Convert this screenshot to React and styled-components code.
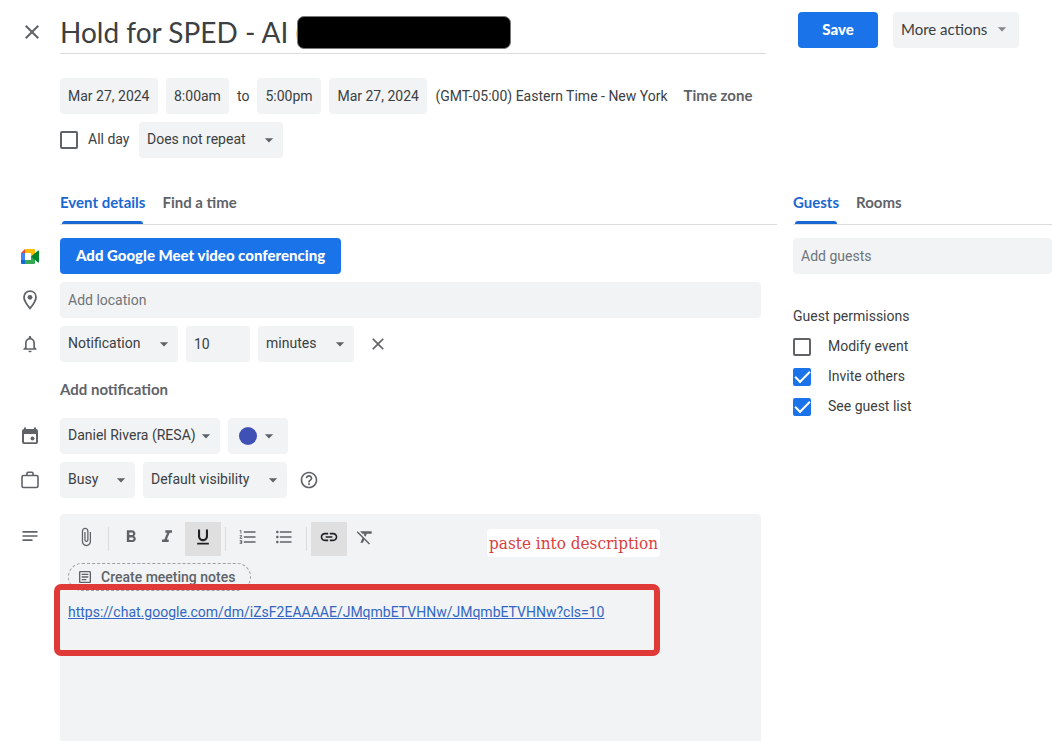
import React from 'react'
import styled, { createGlobalStyle, css } from 'styled-components'
import {
  MdArrowDropDown,
  MdAttachFile,
  MdClose,
  MdFormatBold,
  MdFormatClear,
  MdFormatItalic,
  MdFormatListBulleted,
  MdFormatListNumbered,
  MdFormatUnderlined,
  MdHelpOutline,
  MdLink,
  MdNotes,
  MdNotificationsNone,
  MdOutlineArticle
} from 'react-icons/md'

const NOTE_LINK = 'https://chat.google.com/dm/iZsF2EAAAAE/JMqmbETVHNw/JMqmbETVHNw?cls=10'

const Dropdown = ({ label, value, width }) => (
  <SelectBox $width={width}>
    <select aria-label={label} defaultValue={value}>
      <option>{value}</option>
    </select>
    <MdArrowDropDown />
  </SelectBox>
)

const Check = ({ id, label, wide, checked }) => (
  <CheckRow $wide={wide}>
    <input type='checkbox' id={id} defaultChecked={checked} />
    <label htmlFor={id}>{label}</label>
  </CheckRow>
)

const MeetIcon = () => (
  <svg viewBox='0 0 18 15' width='18' height='15'>
    <path d='M4 0v4H0z' fill='#ea4335' />
    <path d='M4 0h9.2Q14 0 14 1v4.500L10 8V4H4z' fill='#fbbc04' />
    <path d='M0 4h4v7H0z' fill='#4285f4' />
    <path d='M0 11h4v4H1q-1 0-1-1z' fill='#1967d2' />
    <path d='M4 11h6V7.500l4 2V14q0 1-1 1H4z' fill='#34a853' />
    <path d='M10 7.500 16.800 1.700Q18 1 18 2v11q0 1-1.200.300z' fill='#00832d' />
  </svg>
)

const PinIcon = () => (
  <svg viewBox='0 0 20 20' width='20' height='20'>
    <path
      d='M10 1.200c3.500 0 6 2.600 6 6 0 3.300-2.500 7-6 11.200-3.500-4.200-6-7.900-6-11.200 0-3.400 2.500-6 6-6z'
      fill='none'
      stroke='currentColor'
      strokeWidth='1.800'
    />
    <circle cx='10' cy='7.300' r='2.400' fill='currentColor' />
  </svg>
)

const CalendarIcon = () => (
  <svg viewBox='0 0 20 20' width='20' height='20' fill='currentColor'>
    <path
      fillRule='evenodd'
      d='M4 1.500h2V3h8V1.500h2V3a2 2 0 0 1 2 2v11a2 2 0 0 1-2 2H4a2 2 0 0 1-2-2V5a2 2 0 0 1 2-2zM4 8v8.300h12V8z'
    />
    <circle cx='12.500' cy='12.500' r='2' />
  </svg>
)

const CaseIcon = () => (
  <svg viewBox='0 0 20 20' width='20' height='20' fill='none' stroke='currentColor' strokeWidth='1.600'>
    <rect x='2' y='5.500' width='16' height='12' rx='1.500' />
    <path d='M7 5.500V3.300q0-1 1-1h4q1 0 1 1v2.200' />
  </svg>
)

const App = () => (
  <Page>
    <GlobalStyle />
    <Header>
      <IconButton aria-label='Cancel event editing' $size={60}>
        <MdClose size={24} />
      </IconButton>
      <TitleBox>
        <input aria-label='Title' defaultValue='Hold for SPED - AI (' />
        <Redaction />
      </TitleBox>
      <Actions>
        <Primary $save>Save</Primary>
        <MoreButton>
          More actions
          <MdArrowDropDown size={20} />
        </MoreButton>
      </Actions>
    </Header>

    <Schedule>
      <Line>
        <Field $width={98} aria-label='Start date' defaultValue='Mar 27, 2024' />
        <Field $width={63} aria-label='Start time' defaultValue='8:00am' />
        <span>to</span>
        <Field $width={64} aria-label='End time' defaultValue='5:00pm' />
        <Field $width={98} aria-label='End date' defaultValue='Mar 27, 2024' />
        <span>(GMT-05:00) Eastern Time - New York</span>
        <TextButton $inset>Time zone</TextButton>
      </Line>
      <Line>
        <Check id='all-day' label='All day' />
        <Dropdown label='Repeat' value='Does not repeat' width={144} />
      </Line>
    </Schedule>

    <Columns>
      <Details>
        <Tabs $indent>
          <Tab $active>Event details</Tab>
          <Tab>Find a time</Tab>
        </Tabs>
        <Rows>
          <Row>
            <RowIcon><MeetIcon /></RowIcon>
            <Primary>Add Google Meet video conferencing</Primary>
          </Row>
          <Row>
            <RowIcon><PinIcon /></RowIcon>
            <Field aria-label='Location' placeholder='Add location' />
          </Row>
          <Row>
            <RowIcon><MdNotificationsNone /></RowIcon>
            <Line>
              <Dropdown label='Notification type' value='Notification' width={118} />
              <Field $width={64} aria-label='Amount' defaultValue='10' />
              <Dropdown label='Unit' value='minutes' width={96} />
              <IconButton aria-label='Remove notification' $size={32}>
                <MdClose size={20} />
              </IconButton>
            </Line>
          </Row>
          <Row>
            <span />
            <TextButton $tall>Add notification</TextButton>
          </Row>
          <Row>
            <RowIcon><CalendarIcon /></RowIcon>
            <Line>
              <Dropdown label='Calendar' value='Daniel Rivera (RESA)' width={160} />
              <ColorButton aria-label='Event color'>
                <i />
                <MdArrowDropDown size={20} />
              </ColorButton>
            </Line>
          </Row>
          <Row>
            <RowIcon><CaseIcon /></RowIcon>
            <Line>
              <Dropdown label='Availability' value='Busy' width={75} />
              <Dropdown label='Visibility' value='Default visibility' width={144} />
              <IconButton aria-label='Visibility help' $size={28}>
                <MdHelpOutline size={20} />
              </IconButton>
            </Line>
          </Row>
          <Row $spaced>
            <RowIcon $top><MdNotes /></RowIcon>
            <Editor>
              <Toolbar>
                <button aria-label='Attach file'><MdAttachFile /></button>
                <hr />
                <button aria-label='Bold'><MdFormatBold /></button>
                <button aria-label='Italic'><MdFormatItalic /></button>
                <button aria-label='Underline' aria-pressed='true'><MdFormatUnderlined /></button>
                <hr />
                <button aria-label='Numbered list'><MdFormatListNumbered /></button>
                <button aria-label='Bulleted list'><MdFormatListBulleted /></button>
                <hr />
                <button aria-label='Link' aria-pressed='true'><MdLink /></button>
                <button aria-label='Remove formatting'><MdFormatClear /></button>
              </Toolbar>
              <Chip>
                <MdOutlineArticle size={16} />
                Create meeting notes
              </Chip>
              <NoteLink href={NOTE_LINK}>{NOTE_LINK}</NoteLink>
              <Highlight />
              <Callout>paste into description</Callout>
            </Editor>
          </Row>
        </Rows>
      </Details>

      <Guests>
        <Tabs>
          <Tab $active>Guests</Tab>
          <Tab>Rooms</Tab>
        </Tabs>
        <Field aria-label='Guests' placeholder='Add guests' />
        <h2>Guest permissions</h2>
        <Check wide id='modify' label='Modify event' />
        <Check wide id='invite' label='Invite others' checked />
        <Check wide id='see-list' label='See guest list' checked />
      </Guests>
    </Columns>
  </Page>
)

export default App

const GlobalStyle = createGlobalStyle`
  * {
    box-sizing: border-box;
  }
  html, body, #root {
    height: 100%;
  }
  body {
    margin: 0;
    background: #ffffff;
    color: #3c4043;
    font-family: Roboto, sans-serif;
    font-size: 14px;
    line-height: 20px;
  }
  button, input, select {
    margin: 0;
    border: none;
    font: inherit;
    color: inherit;
  }
  button {
    padding: 0;
    background: transparent;
    cursor: pointer;
  }
  svg {
    flex: none;
  }
`

const brandText = css`
  padding-bottom: 2px;
  font-family: Lato, sans-serif;
  font-size: 15px;
  font-weight: 700;
`

const Page = styled.div`
  display: flex;
  flex-direction: column;
  height: 100%;
`

/**
 * STYLED - Header
 */
const Header = styled.header`
  display: flex;
  align-items: flex-start;
  padding-top: 10px;
  padding-right: 33px;
`

const IconButton = styled.button`
  display: flex;
  align-items: center;
  justify-content: center;
  width: ${props => props.$size}px;
  height: 36px;
  color: #5f6368;
  ${Header} & {
    height: 44px;
    padding-left: 4px;
  }
`

const TitleBox = styled.div`
  position: relative;
  flex: 1;
  border-bottom: 1px solid #dadce0;
  input {
    display: block;
    width: 100%;
    height: 43px;
    padding: 0;
    background: transparent;
    font-family: Lato, sans-serif;
    font-size: 28px;
    outline: none;
  }
`

const Redaction = styled.div`
  position: absolute;
  top: 6px;
  left: 237px;
  width: 214px;
  height: 33px;
  border: 1px solid #77797b;
  border-radius: 7px;
  background: #000000;
`

const Actions = styled.div`
  display: flex;
  gap: 15px;
  margin-top: 2px;
  margin-left: 32px;
`

const Primary = styled.button`
  justify-self: start;
  min-width: 80px;
  height: 36px;
  padding: 0 16px;
  border-radius: 4px;
  background: #1a73e8;
  color: #ffffff;
  ${brandText}
  font-weight: 900;
`

const MoreButton = styled.button`
  display: flex;
  align-items: center;
  justify-content: space-between;
  width: 126px;
  height: 36px;
  padding: 0 7px 0 8px;
  border-radius: 4px;
  background: #f1f3f4;
  ${brandText}
  font-weight: 400;
  svg {
    color: #80868b;
  }
`

/**
 * STYLED - form controls
 */
const Line = styled.div`
  display: flex;
  align-items: center;
  gap: 8px;
`

const Schedule = styled.section`
  display: flex;
  flex-direction: column;
  gap: 8px;
  padding-top: 24px;
  padding-left: 60px;
`

const Field = styled.input`
  width: ${props => (props.$width ? `${props.$width}px` : '100%')};
  height: 36px;
  padding: 0 8px;
  border-radius: 4px;
  background: #f1f3f4;
  outline: none;
  &::placeholder {
    color: #70757a;
    opacity: 1;
  }
`

const SelectBox = styled.div`
  position: relative;
  width: ${props => props.$width}px;
  select {
    display: block;
    width: 100%;
    height: 36px;
    padding: 0 8px 2px;
    border-radius: 4px;
    background: #f1f3f4;
    appearance: none;
    outline: none;
  }
  svg {
    position: absolute;
    top: 8px;
    right: 4px;
    width: 20px;
    height: 20px;
    color: #5f6368;
    pointer-events: none;
  }
`

const ColorButton = styled.button`
  display: flex;
  align-items: center;
  gap: 2px;
  width: 60px;
  height: 36px;
  padding-left: 11px;
  border-radius: 4px;
  background: #f1f3f4;
  color: #5f6368;
  i {
    width: 18px;
    height: 18px;
    border-radius: 50%;
    background: #3f51b5;
  }
`

const TextButton = styled.button`
  justify-self: start;
  height: ${props => (props.$tall ? 40 : 36)}px;
  padding: 0 ${props => (props.$inset ? 8 : 0)}px;
  color: #5f6368;
  ${brandText}
`

const CheckRow = styled.div`
  display: flex;
  align-items: center;
  gap: ${props => (props.$wide ? 17 : 10)}px;
  min-width: 71px;
  height: 30px;
  label {
    padding-bottom: 2px;
  }
  input {
    display: grid;
    place-items: center;
    width: 18px;
    height: 18px;
    border: 2px solid #5f6368;
    border-radius: 2px;
    appearance: none;
  }
  input:checked {
    border-color: #1a73e8;
    background: #1a73e8;
  }
  input:checked::after {
    content: '';
    width: 13px;
    height: 6px;
    border: solid #ffffff;
    border-width: 0 0 2px 2px;
    transform: translateY(-2px) rotate(-45deg);
  }
`

/**
 * STYLED - Columns
 */
const Columns = styled.main`
  flex: 1;
  display: grid;
  grid-template-columns: minmax(0, 1fr) 259px;
  column-gap: 16px;
  padding-top: 24px;
`

const Details = styled.section`
  display: flex;
  flex-direction: column;
`

const Tabs = styled.nav`
  display: flex;
  gap: 17px;
  height: 43px;
  margin-left: ${props => (props.$indent ? 60 : 0)}px;
  margin-bottom: 13px;
  border-bottom: 1px solid #dadce0;
`

const Tab = styled.button`
  position: relative;
  color: ${props => (props.$active ? '#1967d2' : '#5f6368')};
  ${brandText}
  &::after {
    content: '';
    display: ${props => (props.$active ? 'block' : 'none')};
    position: absolute;
    right: 2px;
    bottom: 0;
    left: 2px;
    height: 3px;
    border-radius: 3px 3px 0 0;
    background: #1967d2;
  }
`

const Rows = styled.div`
  flex: 1;
  display: flex;
  flex-direction: column;
  gap: 8px;
  padding-right: 16px;
`

const Row = styled.div`
  display: grid;
  grid-template-columns: 60px minmax(0, 1fr);
  ${props => props.$spaced && css`
    flex: 1;
    margin-top: 8px;
  `}
`

const RowIcon = styled.div`
  display: flex;
  align-items: center;
  justify-content: center;
  height: ${props => (props.$top ? 44 : 36)}px;
  color: #5f6368;
  font-size: 20px;
`

const Editor = styled.div`
  position: relative;
  display: flex;
  flex-direction: column;
  align-items: flex-start;
  padding: 8px;
  border-radius: 4px 4px 0 0;
  background: #f1f3f4;
`

const Toolbar = styled.div`
  display: flex;
  align-items: center;
  color: #5f6368;
  font-size: 20px;
  button {
    display: flex;
    align-items: center;
    justify-content: center;
    width: 36px;
    height: 34px;
    padding-bottom: 4px;
  }
  button[aria-pressed='true'] {
    background: #dfdfe0;
    color: #202124;
  }
  hr {
    width: 1px;
    height: 24px;
    margin: 0 4px;
    border: none;
    background: #dadce0;
  }
`

const Chip = styled.button`
  display: flex;
  align-items: center;
  gap: 8px;
  height: 28px;
  margin-top: 7px;
  padding: 0 15px 1px 8px;
  border: 1px dashed #9aa0a6;
  border-radius: 14px;
  color: #5f6368;
  font-weight: 500;
`

const NoteLink = styled.a`
  margin-top: 11px;
  color: #3367c2;
`

const Highlight = styled.div`
  position: absolute;
  top: 70px;
  left: -6px;
  width: 606px;
  height: 72px;
  border: 6px solid #e03a38;
  border-radius: 7px;
  pointer-events: none;
`

const Callout = styled.div`
  position: absolute;
  top: 15px;
  left: 427px;
  padding: 4px 2px;
  border-radius: 4px;
  background: #ffffff;
  color: #d8403f;
  font-family: 'DejaVu Serif Condensed', 'DejaVu Serif', serif;
  font-size: 17px;
`

const Guests = styled.aside`
  h2 {
    margin: 32px 0 6px;
    font-size: 14px;
    font-weight: 400;
  }
`
